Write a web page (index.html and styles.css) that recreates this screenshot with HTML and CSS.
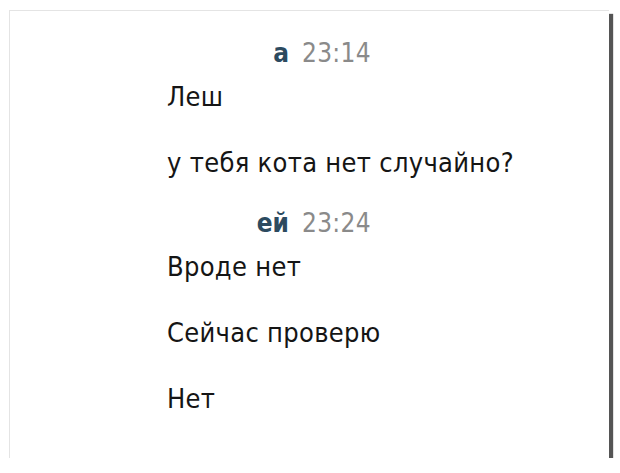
FILE: index.html
```html
<!DOCTYPE html>
<html lang="ru">
<head>
    <meta charset="UTF-8">
    <title>Диалог</title>
    <link rel="stylesheet" href="styles.css">
</head>
<body>
    <div class="card">
        <div class="group">
            <div class="msg-head">
                <span class="author">а</span>
                <span class="time">23:14</span>
            </div>
            <p class="msg">Леш</p>
            <p class="msg">у тебя кота нет случайно?</p>
        </div>

        <div class="group">
            <div class="msg-head">
                <span class="author">ей</span>
                <span class="time">23:24</span>
            </div>
            <p class="msg">Вроде нет</p>
            <p class="msg">Сейчас проверю</p>
            <p class="msg">Нет</p>
        </div>
    </div>
</body>
</html>
```

FILE: styles.css
```css
body {
    margin: 0;
    padding: 10px 0 0 9px;
    background: #fff;
    font-family: "DejaVu Sans", Verdana, sans-serif;
    font-stretch: condensed;
}

.card {
    width: 600px;
    height: 448px;
    box-sizing: border-box;
    background: #fff;
    border-top: 1px solid #e4e4e4;
    border-left: 1px solid #e4e4e4;
    box-shadow: 4px 4px 1px #555;
    padding: 26px 0 0 157px;
}

/* шапка сообщения */
.msg-head {
    display: flex;
    gap: 13px;
    font-size: 26px;
    line-height: 32px;
    margin-bottom: 12px;
}

.author {
    width: 122px;
    text-align: right;
    color: #2c4a5f;
    font-weight: bold;
}

.time {
    color: #8a8a8a;
    letter-spacing: 0.3px;
}

.msg {
    margin: 0 0 34px;
    font-size: 27px;
    line-height: 32px;
    letter-spacing: 0.3px;
    color: #151515;
}

.group .msg:last-child {
    margin-bottom: 28px;
}
```
